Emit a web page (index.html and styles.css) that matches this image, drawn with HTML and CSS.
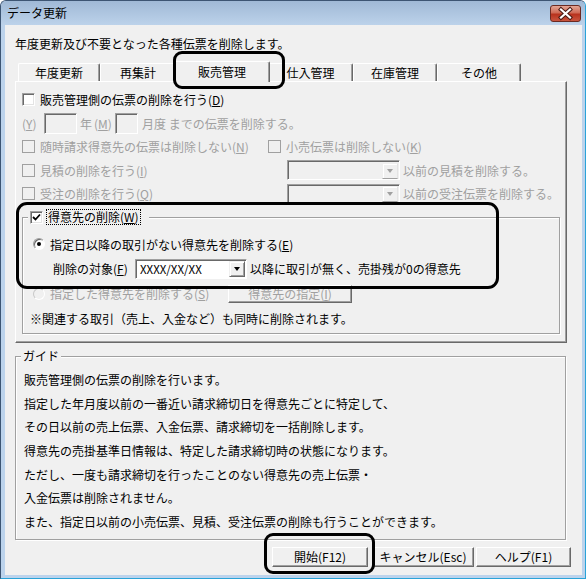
FILE: index.html
```html
<!DOCTYPE html>
<html lang="ja">
<head>
	<meta charset="utf-8" />
	<title>データ更新</title>
	<link rel="stylesheet" href="styles.css">
</head>
<body>
<div class="window">
	<div class="titlebar">
		<span class="title">データ更新</span>
		<span class="close">
			<svg width="29" height="15" viewBox="0 0 29 15">
				<path d="M10 3.5 L19 11.5 M19 3.5 L10 11.5" stroke="#4a1a14" stroke-width="4.2" stroke-linecap="square"/>
				<path d="M10 3.5 L19 11.5 M19 3.5 L10 11.5" stroke="#fff" stroke-width="2.2" stroke-linecap="square"/>
			</svg>
		</span>
	</div>

	<div class="client">
		<p class="intro">年度更新及び不要となった各種伝票を削除します。</p>

		<div class="tabs">
			<span class="tab t1">年度更新</span>
			<span class="tab t2">再集計</span>
			<span class="tab t3 active">販売管理</span>
			<span class="tab t4">仕入管理</span>
			<span class="tab t5">在庫管理</span>
			<span class="tab t6">その他</span>
		</div>

		<div class="panel">
			<div class="row">
				<span class="chk"></span><span>販売管理側の伝票の削除を行う(<u>D</u>)</span>
			</div>
			<div class="row off">
				<span class="lab-y">(<u>Y</u>)</span><span class="edit e-year"></span>
				<span class="lab-nen">年</span>
				<span class="lab-m">(<u>M</u>)</span><span class="edit e-month"></span>
				<span class="lab-tsuki">月度&nbsp;までの伝票を削除する。</span>
			</div>
			<div class="row off">
				<span class="col-a"><span class="chk dis"></span>随時請求得意先の伝票は削除しない(<u>N</u>)</span>
				<span class="chk dis"></span><span>小売伝票は削除しない(<u>K</u>)</span>
			</div>
			<div class="row off">
				<span class="col-b"><span class="chk dis"></span>見積の削除を行う(<u>I</u>)</span>
				<span class="combo dis"><span class="drop"><i class="arrow"></i></span></span>
				<span class="after">以前の見積を削除する。</span>
			</div>
			<div class="row off">
				<span class="col-b"><span class="chk dis"></span>受注の削除を行う(<u>Q</u>)</span>
				<span class="combo dis"><span class="drop"><i class="arrow"></i></span></span>
				<span class="after">以前の受注伝票を削除する。</span>
			</div>

			<fieldset class="grp">
				<legend><span class="chk on">
					<svg width="9" height="9" viewBox="0 0 9 9"><path d="M1 4 L3.5 6.5 L8 1.5" stroke="#000" stroke-width="1.8" fill="none"/></svg>
				</span><span class="focus">得意先の削除(<u>W</u>)</span></legend>
				<div class="row2">
					<span class="radio sel"></span>指定日以降の取引がない得意先を削除する(<u>E</u>)
				</div>
				<div class="row2 indent">
					<span class="lab-target">削除の対象(<u>F</u>)</span>
					<span class="combo live"><span class="val">XXXX/XX/XX</span><span class="drop"><i class="arrow"></i></span></span>
					<span class="after">以降に取引が無く、売掛残が0の得意先</span>
				</div>
				<div class="row2 off">
					<span class="col-c"><span class="radio dis"></span>指定した得意先を削除する(<u>S</u>)</span>
					<span class="btn pick">得意先の指定(<u>I</u>)</span>
				</div>
				<div class="row2 note">※関連する取引（売上、入金など）も同時に削除されます。</div>
			</fieldset>
		</div>

		<fieldset class="guide">
			<legend>ガイド</legend>
			<p>販売管理側の伝票の削除を行います。</p>
			<p>指定した年月度以前の一番近い請求締切日を得意先ごとに特定して、</p>
			<p>その日以前の売上伝票、入金伝票、請求締切を一括削除します。</p>
			<p>得意先の売掛基準日情報は、特定した請求締切時の状態になります。</p>
			<p>ただし、一度も請求締切を行ったことのない得意先の売上伝票・</p>
			<p>入金伝票は削除されません。</p>
			<p>また、指定日以前の小売伝票、見積、受注伝票の削除も行うことができます。</p>
		</fieldset>

		<div class="btns">
			<span class="btn b-start">開始(F12)</span>
			<span class="btn b-cancel">キャンセル(Esc)</span>
			<span class="btn b-help">ヘルプ(F1)</span>
		</div>
	</div>

	<!-- 注記の枠 -->
	<div class="mark mark-tab"></div>
	<div class="mark mark-grp"></div>
	<div class="mark mark-btn"></div>
</div>
</body>
</html>
```

FILE: styles.css
```css
body {
	margin:0;
	font-family:"Noto Sans CJK JP", "Noto Sans", sans-serif;
	font-size:12px;
	color:#000;
}
u {
	text-underline-offset:1px;
}
/*-------------------*/
.window {
	position:relative;
	width:586px;
	height:579px;
	box-sizing:border-box;
	border:1px solid #3d5573;
	border-right-color:#2aa3d8;
	border-bottom-color:#2aa3d8;
	border-radius:6px 6px 0 0;
	background:#bcd3ec;
	padding:0 3px 3px 4px;
}
.titlebar {
	display:flex;
	height:24px;
	margin:0 -3px 0 -4px;
	background:linear-gradient(#a0b9d6, #bcd2ea);
	border-radius:5px 5px 0 0;
}
.title {
	padding-left:6px;
	line-height:24px;
}
.close {
	display:flex;
	align-items:center;
	justify-content:center;
	width:31px;
	height:17px;
	box-sizing:border-box;
	margin:4px 4px 0 auto;
	border:1px solid #6b2a22;
	border-radius:3px;
	background:linear-gradient(#e3a595, #cf6a55 45%, #b8321d 55%, #c9553f);
}
.client {
	height:550px;
	background:#f0f0f0;
	overflow:hidden;
}
.intro {
	margin:0;
	padding:11px 0 0 10px;
	line-height:16px;
}
/*-------------------*/
.tabs {
	display:flex;
	align-items:flex-end;
	height:18px;
	margin:11px 0 0 13px;
}
.tab {
	position:relative;
	box-sizing:border-box;
	height:18px;
	line-height:17px;
	text-align:center;
	border-top:1px solid #fff;
	border-left:1px solid #fff;
	border-right:1px solid #696969;
	box-shadow:inset -1px 0 #a0a0a0;
	border-radius:2px 2px 0 0;
	background:#f0f0f0;
}
.t1 { width:82px; }
.t2 { width:76px; }
.t3 { width:96px; }
.t4 { width:85px; }
.t5 { width:84px; }
.t6 { width:84px; }
.tab.active {
	z-index:1;
	height:21px;
	margin:0 -2px -1px;
	line-height:17px;
	padding-top:1px;
}
.panel {
	box-sizing:border-box;
	width:552px;
	height:262px;
	margin-left:10px;
	padding:6px 0 0 6px;
	border:1px solid;
	border-color:#fff #696969 #696969 #fff;
	box-shadow:inset -1px -1px #a0a0a0;
}
.row {
	display:flex;
	align-items:center;
	height:23.5px;
	white-space:nowrap;
}
.off {
	color:#a0a0a0;
}
/*-------------------*/
.chk {
	display:inline-flex;
	align-items:center;
	justify-content:center;
	flex:none;
	width:13px;
	height:13px;
	box-sizing:border-box;
	margin-right:5px;
	border:1px solid;
	border-color:#a0a0a0 #fff #fff #a0a0a0;
	box-shadow:inset 1px 1px #696969, inset -1px -1px #e3e3e3;
	background:#fff;
}
.chk.dis {
	background:#f0f0f0;
	border-color:#a0a0a0;
	box-shadow:none;
}
.radio {
	display:inline-flex;
	align-items:center;
	justify-content:center;
	flex:none;
	width:12px;
	height:12px;
	box-sizing:border-box;
	margin-right:3px;
	border:1px solid;
	border-color:#a0a0a0 #fff #fff #a0a0a0;
	border-radius:50%;
	box-shadow:inset 1px 1px #696969;
	background:#fff;
}
.radio.sel::after {
	content:"";
	width:4px;
	height:4px;
	border-radius:50%;
	background:#000;
}
.radio.dis {
	background:#f0f0f0;
	border-color:#c8c8c8 #fff #fff #c8c8c8;
	box-shadow:none;
}
.edit {
	box-sizing:border-box;
	height:21px;
	border:1px solid;
	border-color:#a0a0a0 #fff #fff #a0a0a0;
	box-shadow:inset 1px 1px #696969;
	background:#f0f0f0;
}
.lab-y { width:22px; }
.e-year { width:33px; }
.lab-nen { margin-left:3px; width:12px; }
.lab-m { margin-left:2px; width:21px; }
.e-month { width:23px; }
.lab-tsuki { margin-left:4px; }
.col-a {
	display:flex;
	align-items:center;
	width:246px;
}
.col-b {
	display:flex;
	align-items:center;
	width:265px;
}
/*-------------------*/
.combo {
	display:flex;
	align-items:center;
	justify-content:space-between;
	box-sizing:border-box;
	border:1px solid;
	border-color:#a0a0a0 #fff #fff #a0a0a0;
	box-shadow:inset 1px 1px #696969;
}
.combo.dis {
	width:113px;
	height:20px;
	justify-content:flex-end;
	background:#f0f0f0;
	padding:1px 1px 0 0;
}
.combo.live {
	width:112px;
	height:20px;
	padding:1px 1px 0 1px;
	background:#fff;
	color:#000;
}
.val {
	padding-left:3px;
	font-size:11.5px;
}
.drop {
	display:flex;
	align-items:center;
	justify-content:center;
	box-sizing:border-box;
	width:16px;
	height:16px;
	border:1px solid;
	border-color:#f0f0f0 #696969 #696969 #f0f0f0;
	box-shadow:inset 1px 1px #fff, inset -1px -1px #a0a0a0;
	background:#f0f0f0;
}
.arrow {
	width:0;
	height:0;
	border-left:3.5px solid transparent;
	border-right:3.5px solid transparent;
	border-top:4px solid #000;
}
.combo.dis .drop {
	border-color:#f0f0f0 #e3e3e3 #a0a0a0 #f0f0f0;
	box-shadow:inset 1px 1px #fff;
}
.combo.dis .arrow {
	border-top-color:#a0a0a0;
}
.after {
	margin-left:3px;
}
/*-------------------*/
.grp {
	box-sizing:border-box;
	width:538px;
	margin:3.5px 0 0;
	padding:7px 0 2px 10px;
	border:1px solid #a0a0a0;
	box-shadow:inset 1px 1px #fff, 1px 1px #fff;
}
.grp legend {
	display:flex;
	align-items:center;
	height:16px;
	margin-left:-5px;
	padding:0 9px 0 2px;
	background:#f0f0f0;
}
.grp legend .chk {
	margin-right:4px;
}
.focus {
	line-height:14px;
	padding:0 1px;
	outline:1px dotted #000;
	outline-offset:0;
}
.row2 {
	display:flex;
	align-items:center;
	height:24.67px;
	white-space:nowrap;
}
.row2 .radio {
	margin-right:5px;
}
.indent {
	padding-left:20px;
}
.lab-target {
	width:82px;
}
.col-c {
	display:flex;
	align-items:center;
	width:195px;
}
.note {
	margin-left:-3px;
}
/*-------------------*/
.btn {
	display:flex;
	align-items:center;
	justify-content:center;
	box-sizing:border-box;
	height:20px;
	border:1px solid;
	border-color:#fff #696969 #696969 #fff;
	box-shadow:inset -1px -1px #a0a0a0;
	background:#f0f0f0;
	white-space:nowrap;
}
.pick {
	width:124px;
	height:18px;
	color:#a0a0a0;
}
.guide {
	box-sizing:border-box;
	width:551px;
	margin:5px 0 0 10px;
	padding:4px 8px 5px;
	border:1px solid #a0a0a0;
	box-shadow:inset 1px 1px #fff, 1px 1px #fff;
}
.guide legend {
	margin-left:-3px;
	padding:0 2px;
	line-height:16px;
	background:#f0f0f0;
}
.guide p {
	margin:0;
	line-height:23.67px;
	white-space:nowrap;
}
.btns {
	display:flex;
	justify-content:flex-end;
	margin:7px 11px 0 0;
}
.b-start { width:96px; }
.b-cancel { width:102px; margin-left:4px; }
.b-help { width:95px; margin-left:2px; }
/*-------------------*/
.mark {
	position:absolute;
	z-index:5;
	box-sizing:border-box;
	border:3px solid #000;
	border-radius:9px;
}
.mark-tab {
	left:172px;
	top:50px;
	width:112px;
	height:38px;
}
.mark-grp {
	left:15px;
	top:201px;
	width:483px;
	height:87px;
	border-radius:11px;
}
.mark-btn {
	left:263px;
	top:532px;
	width:111px;
	height:41px;
}
```
